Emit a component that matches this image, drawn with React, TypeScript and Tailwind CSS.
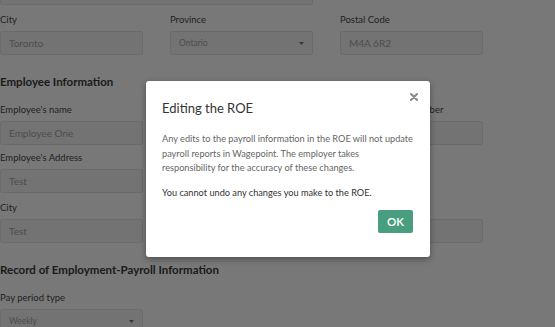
import React from 'react'

function Field({ label, value, select, small }: { label?: string; value?: string; select?: boolean; small?: boolean }) {
  return (
    <div className="flex flex-col">
      <div className="h-[14px] text-[9.5px] leading-[14px] text-[#4a4a4a] whitespace-nowrap">{label}</div>
      <div className="mt-[4px] flex h-[24px] items-center justify-between rounded-[2px] border border-[#e4e4e4] bg-[#f4f4f4] pl-[8px] pr-[8px]">
        <span className={`${small ? 'text-[8.5px]' : 'text-[10px]'} text-[#a6a6a6]`}>{value}</span>
        {select && (
          <svg width="5" height="3" viewBox="0 0 5 3"><path d="M0 0h5L2.5 3z" fill="#777" /></svg>
        )}
      </div>
    </div>
  )
}

export default function App() {
  return (
    <div className="relative h-[327px] w-[555px] overflow-hidden bg-white font-['Lato',sans-serif]">
      <div className="-mt-[19px] flex flex-col">
        <div className="h-[24px] w-[313px] rounded-[2px] border border-[#e4e4e4] bg-[#f4f4f4]" />
        <div className="mt-[8px] grid grid-cols-[143px_143px_143px] gap-x-[27px]">
          <Field label="City" value="Toronto" />
          <Field label="Province" value="Ontario" select small />
          <Field label="Postal Code" value="M4A 6R2" />
        </div>
        <h2 className="mt-[20px] h-[14px] text-[11.5px] font-bold leading-[14px] text-[#3a3a3a]">Employee Information</h2>
        <div className="mt-[14px] grid grid-cols-[143px_143px_143px] gap-x-[27px]">
          <Field label="Employee's name" value="Employee One" />
          <Field />
          <Field label="Social Insurance Number" value="" />
        </div>
        <div className="mt-[6px] grid grid-cols-[143px_143px_143px] gap-x-[27px]">
          <Field label="Employee's Address" value="Test" />
          <Field />
          <div />
        </div>
        <div className="mt-[8px] grid grid-cols-[143px_143px_143px] gap-x-[27px]">
          <Field label="City" value="Test" />
          <Field select />
          <Field />
        </div>
        <h2 className="mt-[20px] h-[14px] text-[11.5px] font-bold leading-[14px] text-[#3a3a3a]">Record of Employment-Payroll Information</h2>
        <div className="mt-[14px] grid grid-cols-[143px_143px_143px] gap-x-[27px]">
          <Field label="Pay period type" value="Weekly" select small />
        </div>
      </div>

      <div className="absolute inset-0 bg-black/[0.53]" />

      <div className="absolute left-[146px] top-[81px] h-[176px] w-[284px] rounded-[3px] bg-white px-[16px] pt-[19px] shadow-[0_2px_6px_rgba(0,0,0,0.35)]">
        <button className="absolute right-[12px] top-[12px]">
          <svg width="8" height="8" viewBox="0 0 8 8"><path d="M1 1l6 6M7 1L1 7" stroke="#8a8a8a" strokeWidth="2" strokeLinecap="round" /></svg>
        </button>
        <h3 className="text-[13px] leading-[16px] text-[#333]">Editing the ROE</h3>
        <p className="mt-[16px] text-[9.2px] leading-[14.5px] text-[#666]">
          Any edits to the payroll information in the ROE will not update payroll reports in Wagepoint. The employer takes responsibility for the accuracy of these changes.
        </p>
        <p className="mt-[10px] text-[9.2px] leading-[14.5px] text-[#333]">You cannot undo any changes you make to the ROE.</p>
        <div className="mt-[10px] flex justify-end pr-[1px]">
          <button className="h-[23px] w-[35px] rounded-[2px] bg-[#4a9e80] text-[11.5px] font-semibold text-white">OK</button>
        </div>
      </div>
    </div>
  )
}
